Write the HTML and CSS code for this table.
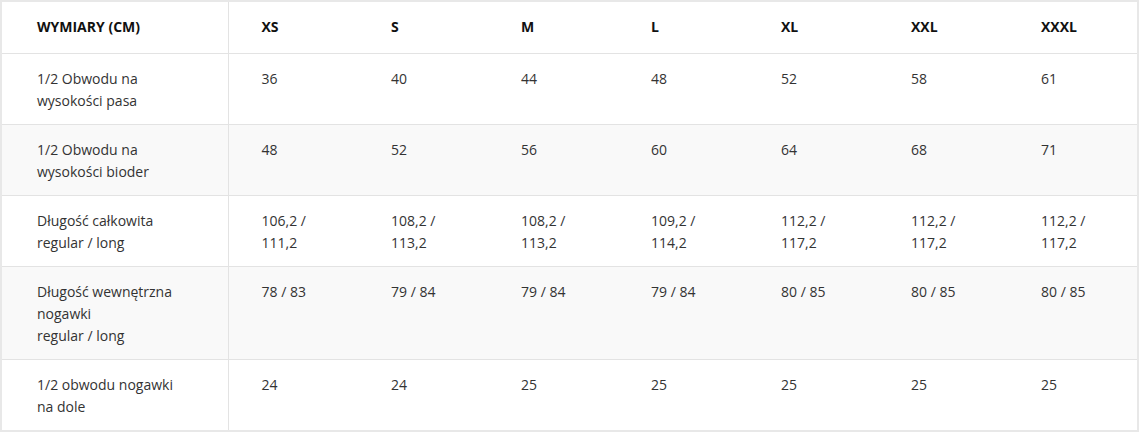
FILE: index.html
```html
<!DOCTYPE html>
<html lang="pl">
<head>
<meta charset="utf-8">
<link rel="stylesheet" href="styles.css">
</head>
<body>
<table class="size-table">
  <colgroup>
    <col class="col-label">
    <col class="col-size"><col class="col-size"><col class="col-size"><col class="col-size"><col class="col-size"><col class="col-size"><col class="col-size">
  </colgroup>
  <thead>
    <tr>
      <th class="label">WYMIARY (CM)</th>
      <th>XS</th><th>S</th><th>M</th><th>L</th><th>XL</th><th>XXL</th><th>XXXL</th>
    </tr>
  </thead>
  <tbody>
    <tr>
      <td class="label">1/2 Obwodu na<br>wysokości pasa</td>
      <td>36</td><td>40</td><td>44</td><td>48</td><td>52</td><td>58</td><td>61</td>
    </tr>
    <tr class="alt">
      <td class="label">1/2 Obwodu na<br>wysokości bioder</td>
      <td>48</td><td>52</td><td>56</td><td>60</td><td>64</td><td>68</td><td>71</td>
    </tr>
    <tr>
      <td class="label">Długość całkowita<br>regular / long</td>
      <td>106,2 /<br>111,2</td><td>108,2 /<br>113,2</td><td>108,2 /<br>113,2</td><td>109,2 /<br>114,2</td><td>112,2 /<br>117,2</td><td>112,2 /<br>117,2</td><td>112,2 /<br>117,2</td>
    </tr>
    <tr class="alt">
      <td class="label">Długość wewnętrzna<br>nogawki<br>regular / long</td>
      <td>78 / 83</td><td>79 / 84</td><td>79 / 84</td><td>79 / 84</td><td>80 / 85</td><td>80 / 85</td><td>80 / 85</td>
    </tr>
    <tr>
      <td class="label">1/2 obwodu nogawki<br>na dole</td>
      <td>24</td><td>24</td><td>25</td><td>25</td><td>25</td><td>25</td><td>25</td>
    </tr>
  </tbody>
</table>
</body>
</html>
```
FILE: styles.css
```css
html, body {
  margin: 0;
  padding: 0;
  background: #ffffff;
}

.size-table {
  width: 1138px;
  border-collapse: collapse;
  table-layout: fixed;
  border: 2px solid #e8e8e8;
  font-family: "Open Sans", "Liberation Sans", sans-serif;
  font-size: 14px;
  line-height: 22px;
  color: #333333;
}

.col-label {
  width: 227px;
}

.col-size {
  width: 130px;
}

.size-table th,
.size-table td {
  text-align: left;
  vertical-align: top;
  padding: 14px 6px 12px 33px;
  border-top: 1px solid #e3e3e3;
}

.size-table th {
  font-weight: 700;
  color: #111111;
  padding-top: 14px;
  padding-bottom: 15px;
  border-top: none;
}

.size-table .label {
  padding-left: 35px;
  border-right: 1px solid #e3e3e3;
}

.size-table tr.alt td {
  background: #f9f9f9;
}
```
